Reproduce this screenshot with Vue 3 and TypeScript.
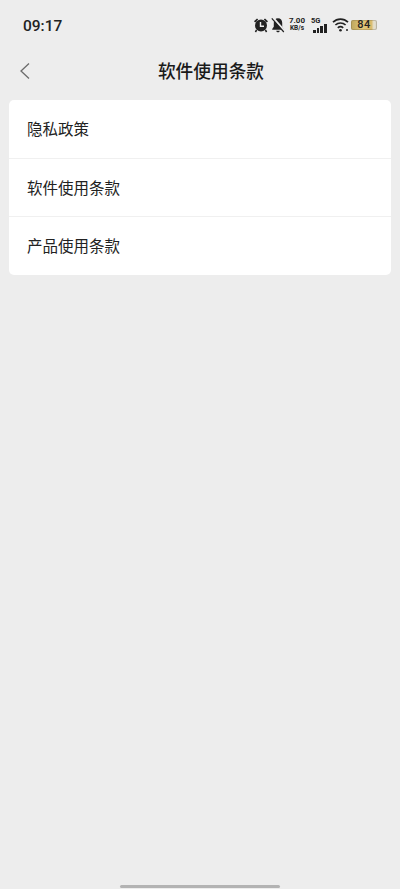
<script setup lang="ts">
const items: string[] = ['隐私政策', '软件使用条款', '产品使用条款']
</script>

<template>
  <div class="page">
    <div class="status">
      <span class="time">09:17</span>
      <div class="icons">
        <svg class="alarm" viewBox="0 0 16 16" width="16" height="16">
          <path d="M1 4.2 4 1.400 5.200 2.600 2.200 5.400Z M15 4.200 12 1.400 10.800 2.600 13.800 5.400Z" fill="#222" />
          <circle cx="8" cy="8.600" r="6" fill="#222" />
          <path d="M7.500 5v4.200h3.500" fill="none" stroke="#ededed" stroke-width="1.400" />
          <path d="M3.600 13 2.400 15M12.400 13l1.200 2" stroke="#222" stroke-width="1.500" />
        </svg>
        <svg class="bell" viewBox="0 0 14 16" width="14" height="16">
          <path d="M7 1.200c-2.600 0-4.200 2-4.200 4.600v4L1.200 12v.8h11.600V12l-1.600-2.200v-4C11.200 3.200 9.600 1.200 7 1.200Z" fill="#222" />
          <path d="M5.200 13.800h3.600c-.3 1-1 1.500-1.800 1.500s-1.500-.5-1.800-1.500Z" fill="#222" />
          <path d="M2 .8 13.500 13.800" stroke="#ededed" stroke-width="2.200" />
          <path d="M.8 1.400 12.800 15" stroke="#222" stroke-width="1.200" />
        </svg>
        <div class="speed"><span class="rate">7.00</span><span class="unit">KB/s</span></div>
        <div class="signal">
          <span class="five">5G</span>
          <div class="bars">
            <i class="b1"></i><i class="b2"></i><i class="b3"></i><i class="b4"></i>
          </div>
        </div>
        <svg class="wifi" viewBox="0 0 17 15" width="17" height="15">
          <path d="M1 5.200C5.200 1 11.800 1 16 5.200" fill="none" stroke="#222" stroke-width="1.700" />
          <path d="M3.400 8c2.900-2.700 7.300-2.700 10.200 0" fill="none" stroke="#222" stroke-width="1.700" />
          <path d="M5.800 10.800c1.600-1.400 3.800-1.400 5.400 0" fill="none" stroke="#222" stroke-width="1.700" />
          <circle cx="8.500" cy="13.200" r="1.300" fill="#222" />
          <circle cx="15" cy="13" r="1" fill="#222" />
        </svg>
        <div class="battery"><span class="level">84</span></div>
      </div>
    </div>

    <header class="nav">
      <svg class="back" viewBox="0 0 12 18" width="12" height="18">
        <path d="M10 1.500 2 9l8 7.500" fill="none" stroke="#6b6b6b" stroke-width="1.300" />
      </svg>
      <h1 class="title">软件使用条款</h1>
    </header>

    <ul class="card">
      <li v-for="item in items" :key="item" class="row">{{ item }}</li>
    </ul>

    <div class="home"></div>
  </div>
</template>

<style scoped>
.page {
  position: relative;
  height: 889px;
  background: #ededed;
  font-family: "Noto Sans CJK SC", "Liberation Sans", sans-serif;
  color: #1d1d1d;
  overflow: hidden;
  display: flex;
  flex-direction: column;
}
.status {
  height: 50px;
  padding: 0 23px;
  display: flex;
  justify-content: space-between;
  align-items: center;
}
.time {
  font-family: Roboto, "Liberation Sans", sans-serif;
  font-size: 15.500px;
  font-weight: 500;
  color: #222;
  margin-top: 1px;
}
.icons {
  display: flex;
  align-items: center;
  margin-top: -1px;
}
.alarm { margin-right: 2px; margin-left: -1px; }
.bell { margin-right: 3px; }
.speed {
  display: flex;
  flex-direction: column;
  align-items: center;
  width: 18px;
  margin-right: 5px;
  font-family: Roboto, "Liberation Sans", sans-serif;
  font-weight: 700;
  color: #222;
}
.rate { font-size: 8px; line-height: 8px; }
.unit { font-size: 6.500px; line-height: 7px; }
.signal {
  position: relative;
  width: 16px;
  height: 14px;
  margin-right: 5px;
}
.five {
  position: absolute;
  left: 0;
  top: -1px;
  font-family: Roboto, "Liberation Sans", sans-serif;
  font-size: 7.500px;
  line-height: 7px;
  font-weight: 700;
  color: #222;
}
.bars {
  position: absolute;
  left: 0;
  right: 0;
  bottom: -1px;
  display: flex;
  align-items: flex-end;
  justify-content: flex-end;
  gap: 1px;
}
.bars i { width: 2.800px; background: #222; display: block; }
.b1 { height: 3px; }
.b2 { height: 5px; }
.b3 { height: 7px; }
.b4 { height: 9px; }
.wifi { margin-right: 2px; }
.battery {
  width: 26px;
  height: 10px;
  border-radius: 2px;
  background: linear-gradient(90deg, #bda65f 0%, #e3c878 45%, #d8b968 78%, #e6e2d2 88%, #d6d2c4 100%);
  box-shadow: inset 0 0 0 1px rgba(90, 80, 50, 0.25);
  display: flex;
  align-items: center;
  justify-content: center;
  margin-top: 1px;
}
.level {
  font-family: Roboto, "Liberation Sans", sans-serif;
  font-size: 11px;
  font-weight: 500;
  letter-spacing: 0.5px;
  line-height: 10px;
  color: #222;
}
.nav {
  position: relative;
  height: 44px;
  padding-left: 22px;
  display: flex;
  align-items: center;
  justify-content: center;
}
.back {
  position: absolute;
  left: 19px;
  top: 12px;
}
.title {
  margin: 0 0 3px;
  font-size: 17.700px;
  line-height: 41px;
  font-weight: 500;
  color: #1a1a1a;
}
.card {
  list-style: none;
  margin: 6px 9px 0;
  padding: 0 0 1px;
  background: #fff;
  border-radius: 5px;
}
.row {
  height: 58px;
  padding: 0 0 2px 18px;
  display: flex;
  align-items: center;
  font-size: 15.500px;
  color: #222;
  border-top: 1px solid #f0f0f0;
  box-sizing: border-box;
}
.row:first-child { border-top: 0; }
.home {
  position: absolute;
  left: 120px;
  bottom: 1px;
  width: 160px;
  height: 3px;
  border-radius: 2px;
  background: #b3b3b3;
}
</style>
